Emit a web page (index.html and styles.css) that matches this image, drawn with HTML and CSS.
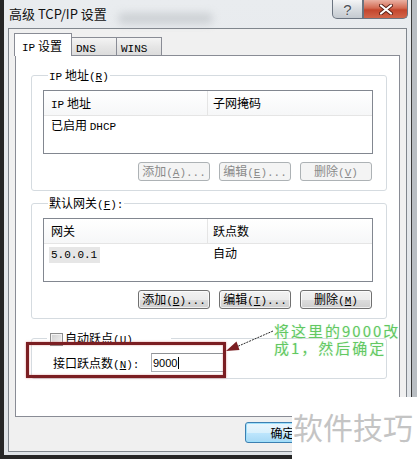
FILE: index.html
```html
<!DOCTYPE html>
<html lang="zh-CN">
<head>
  <meta charset="UTF-8">
  <meta name="viewport" content="width=device-width, initial-scale=1.0">
  <title>高级 TCP/IP 设置</title>
  <link rel="stylesheet" href="styles.css">
</head>
<body>
  <div class="window">
    <div class="titlebar">
      <span class="title">高级 TCP/IP 设置</span>
      <span class="title-blur"></span>
      <div class="caption-buttons">
        <button class="cap-help">?</button>
        <button class="cap-close">
          <svg width="14" height="11" viewBox="0 0 14 11">
            <path d="M2 1.5 L12 9.5 M12 1.5 L2 9.5" stroke="#5a2016" stroke-width="4" stroke-linecap="round"/>
            <path d="M2 1.5 L12 9.5 M12 1.5 L2 9.5" stroke="#ffffff" stroke-width="2.2" stroke-linecap="round"/>
          </svg>
        </button>
      </div>
    </div>

    <div class="client">
      <div class="tabs">
        <div class="tab active"><span class="en">IP</span> 设置</div>
        <div class="tab"><span class="en">DNS</span></div>
        <div class="tab"><span class="en">WINS</span></div>
      </div>

      <div class="tab-panel">
        <!-- IP addresses -->
        <div class="group">
          <div class="group-label"><span class="en">IP</span> 地址<span class="en">(<u>R</u>)</span></div>
          <div class="listbox">
            <div class="list-head">
              <span class="col col-1"><span class="en">IP</span> 地址</span>
              <span class="col">子网掩码</span>
            </div>
            <div class="list-row">
              <span class="col col-1">已启用 <span class="en">DHCP</span></span>
              <span class="col"></span>
            </div>
          </div>
          <div class="button-row">
            <button class="btn" disabled>添加<span class="en">(<u>A</u>)...</span></button>
            <button class="btn" disabled>编辑<span class="en">(<u>E</u>)...</span></button>
            <button class="btn" disabled>删除<span class="en">(<u>V</u>)</span></button>
          </div>
        </div>

        <!-- Default gateways -->
        <div class="group gateways">
          <div class="group-label">默认网关<span class="en">(<u>F</u>):</span></div>
          <div class="listbox">
            <div class="list-head">
              <span class="col col-1">网关</span>
              <span class="col">跃点数</span>
            </div>
            <div class="list-row">
              <span class="col col-1"><span class="sel en">5.0.0.1</span></span>
              <span class="col">自动</span>
            </div>
          </div>
          <div class="button-row">
            <button class="btn">添加<span class="en">(<u>D</u>)...</span></button>
            <button class="btn">编辑<span class="en">(<u>T</u>)...</span></button>
            <button class="btn">删除<span class="en">(<u>M</u>)</span></button>
          </div>
        </div>

        <!-- Metric -->
        <div class="group metric">
          <div class="group-label check-label">
            <span class="checkbox"></span>
            <span>自动跃点<span class="en">(<u>U</u>)</span></span>
          </div>
          <div class="field-row">
            <span class="field-label">接口跃点数<span class="en">(<u>N</u>):</span></span>
            <span class="textbox">9000<span class="caret"></span></span>
          </div>
        </div>
      </div>

      <div class="dialog-buttons">
        <button class="btn btn-default">确定</button>
      </div>
    </div>
  </div>

  <!-- annotation drawn on top of the screenshot -->
  <div class="mark-box"></div>
  <svg class="arrow" width="60" height="32" viewBox="0 0 60 32">
    <line x1="51" y1="5" x2="12" y2="22" stroke="#2a2a2a" stroke-width="1" stroke-dasharray="2 1"/>
    <polygon points="4,25 17.5,24 14.5,15.5" fill="#7b1e22"/>
  </svg>
  <div class="note">
    <div>将这里的9000改</div>
    <div>成1，然后确定</div>
  </div>
  <div class="watermark">软件技巧</div>
</body>
</html>
```

FILE: styles.css
```css
* {
  box-sizing: border-box;
}

body {
  margin: 0;
  width: 417px;
  height: 459px;
  overflow: hidden;
  background: #262626;
  font-family: "Noto Sans CJK SC", sans-serif;
  font-size: 12px;
  color: #000;
}

.en {
  font-family: "Liberation Mono", monospace;
  font-size: 11px;
}

u {
  text-decoration: underline;
}

/* window frame */

.window {
  margin-left: 4px;
  width: 413px;
  height: 455px;
  padding: 0 10px 3px 4px;
  display: flex;
  flex-direction: column;
  background: linear-gradient(#e9ecef, #dfe3e7);
  box-shadow: inset -5px 0 0 #b9bec3, inset -6px 0 0 #3a3a3a;
}

.titlebar {
  position: relative;
  height: 28px;
  display: flex;
  align-items: flex-start;
}

.title {
  margin-left: 1px;
  line-height: 28px;
  font-size: 13px;
  color: #111;
}

.title-blur {
  position: absolute;
  left: 110px;
  top: 13px;
  width: 95px;
  height: 11px;
  border-radius: 5px;
  background: #a9aeb3;
  opacity: 0.45;
  filter: blur(4px);
}

.caption-buttons {
  margin-left: auto;
  margin-right: -1px;
  display: flex;
}

.caption-buttons button {
  height: 19px;
  padding: 0;
  border: 1px solid #6b7480;
  border-top: none;
  display: flex;
  align-items: center;
  justify-content: center;
}

.cap-help {
  width: 31px;
  border-radius: 0 0 0 5px;
  background: linear-gradient(#f4f5f6, #d9dde1 50%, #c4cad0);
  font-family: "Liberation Sans", sans-serif;
  font-size: 15px;
  color: #4b5057;
  text-shadow: 0 0 2px #fff;
}

.cap-close {
  width: 45px;
  border-left: none;
  border-color: #6a2a20;
  border-radius: 0 0 5px 0;
  background: linear-gradient(#eab1a3, #d36a52 45%, #c4462d 55%, #d2654a);
}

/* client area */

.client {
  flex: 1;
  border: 1px solid #80868d;
  background: #f0f0f0;
  padding: 4px 6px 0 6px;
}

.tabs {
  height: 22px;
  margin-left: -1px;
  display: flex;
  align-items: flex-end;
}

.tab {
  position: relative;
  width: 46px;
  height: 18px;
  margin-right: -1px;
  padding-left: 4px;
  border: 1px solid #898c95;
  border-bottom: none;
  background: linear-gradient(#f4f4f4, #e6e6e6 50%, #dcdcdc);
  line-height: 17px;
}

.tab.active {
  z-index: 1;
  width: 58px;
  height: 23px;
  margin-bottom: -1px;
  padding: 3px 0 0 7px;
  background: #fff;
}

.tab-panel {
  height: 362px;
  padding: 0 12px 0 15px;
  border: 1px solid #898c95;
  background: #fff;
}

/* group boxes */

.group {
  margin-top: 19px;
  padding: 0 13px 9px 11px;
  border: 1px solid #d5dbe0;
  border-radius: 3px;
}

.gateways {
  margin-top: 12px;
}

.metric {
  margin-top: 19px;
  padding-bottom: 6px;
}

.group-label {
  width: fit-content;
  margin: -8px 0 0 5px;
  padding: 0 1px;
  line-height: 14px;
  background: #fff;
}

.check-label {
  width: 124px;
  margin-left: 4px;
  padding-left: 3px;
  display: flex;
  align-items: center;
}

.checkbox {
  width: 13px;
  height: 13px;
  margin-right: 2px;
  border: 1px solid #8e8f8f;
  background: linear-gradient(135deg, #cfcfcf, #f6f6f6);
  box-shadow: inset 0 0 0 1px #f4f4f4;
}

/* list views */

.listbox {
  margin-top: 6px;
  height: 64px;
  border: 1px solid #828790;
  background: #fff;
}

.list-head {
  height: 25px;
  display: flex;
  line-height: 24px;
  border-bottom: 1px solid #e5e5e5;
  background: linear-gradient(#fff, #f6f7f8);
}

.list-row {
  display: flex;
  line-height: 17px;
}

.col {
  padding-left: 5px;
}

.col-1 {
  width: 164px;
  padding-left: 7px;
}

.list-head .col-1 {
  border-right: 1px solid #e5e5e5;
}

.sel {
  display: inline-block;
  margin-left: -2px;
  padding: 0 3px 0 2px;
  line-height: 16px;
  background: #e6e6e6;
}

/* buttons */

.button-row {
  margin: 8px 1px 0 0;
  display: flex;
  justify-content: flex-end;
  gap: 9px;
}

.btn {
  width: 72px;
  height: 19px;
  padding: 0;
  border: 1px solid #707070;
  border-radius: 3px;
  background: linear-gradient(#f2f2f2, #ebebeb 50%, #dddddd 50%, #cfcfcf);
  box-shadow: inset 0 0 0 1px rgba(255, 255, 255, 0.7);
  font-family: "Noto Sans CJK SC", sans-serif;
  font-size: 12px;
  line-height: 16px;
  color: #000;
  white-space: nowrap;
}

.btn:disabled {
  border-color: #adb2b5;
  background: #f4f4f4;
  box-shadow: none;
  color: #8a8a8a;
}

.field-row {
  margin-top: 6px;
  padding-left: 10px;
  display: flex;
  align-items: center;
}

.field-label {
  width: 98px;
}

.textbox {
  width: 73px;
  height: 19px;
  padding-left: 1px;
  border: 1px solid #abadb3;
  border-top-color: #8f9296;
  display: flex;
  align-items: center;
  font-family: "Liberation Sans", sans-serif;
  font-size: 11px;
}

.caret {
  width: 1px;
  height: 12px;
  margin-left: 1px;
  background: #000;
}

.dialog-buttons {
  margin-top: 5px;
  padding-right: 80px;
  display: flex;
  justify-content: flex-end;
}

.dialog-buttons .btn {
  width: 75px;
  height: 21px;
}

.btn-default {
  border-color: #3c7fb1;
  background: linear-gradient(#eaf6fd, #d9f0fc 50%, #bee6fd 50%, #a7d9f5);
  box-shadow: inset 0 0 0 1px #9fe0fb;
}

/* annotation layer */

.mark-box {
  position: absolute;
  left: 26px;
  top: 342px;
  width: 200px;
  height: 36px;
  border: 3px solid #7b1e22;
  box-shadow: 0 0 2px rgba(200, 80, 80, 0.6), inset 0 0 2px rgba(200, 80, 80, 0.6);
}

.arrow {
  position: absolute;
  left: 222px;
  top: 326px;
}

.note {
  position: absolute;
  left: 274px;
  top: 322px;
  font-size: 15px;
  line-height: 17px;
  letter-spacing: 2px;
  color: #62c862;
  text-shadow: 0 0 2px #d6f3d6;
  white-space: nowrap;
}

.watermark {
  position: absolute;
  left: 292px;
  top: 397px;
  right: 0;
  bottom: 0;
  padding: 14px 0 0 1px;
  background: #fff;
  font-size: 30px;
  line-height: 30px;
  color: #c4c4c4;
  white-space: nowrap;
}
```
